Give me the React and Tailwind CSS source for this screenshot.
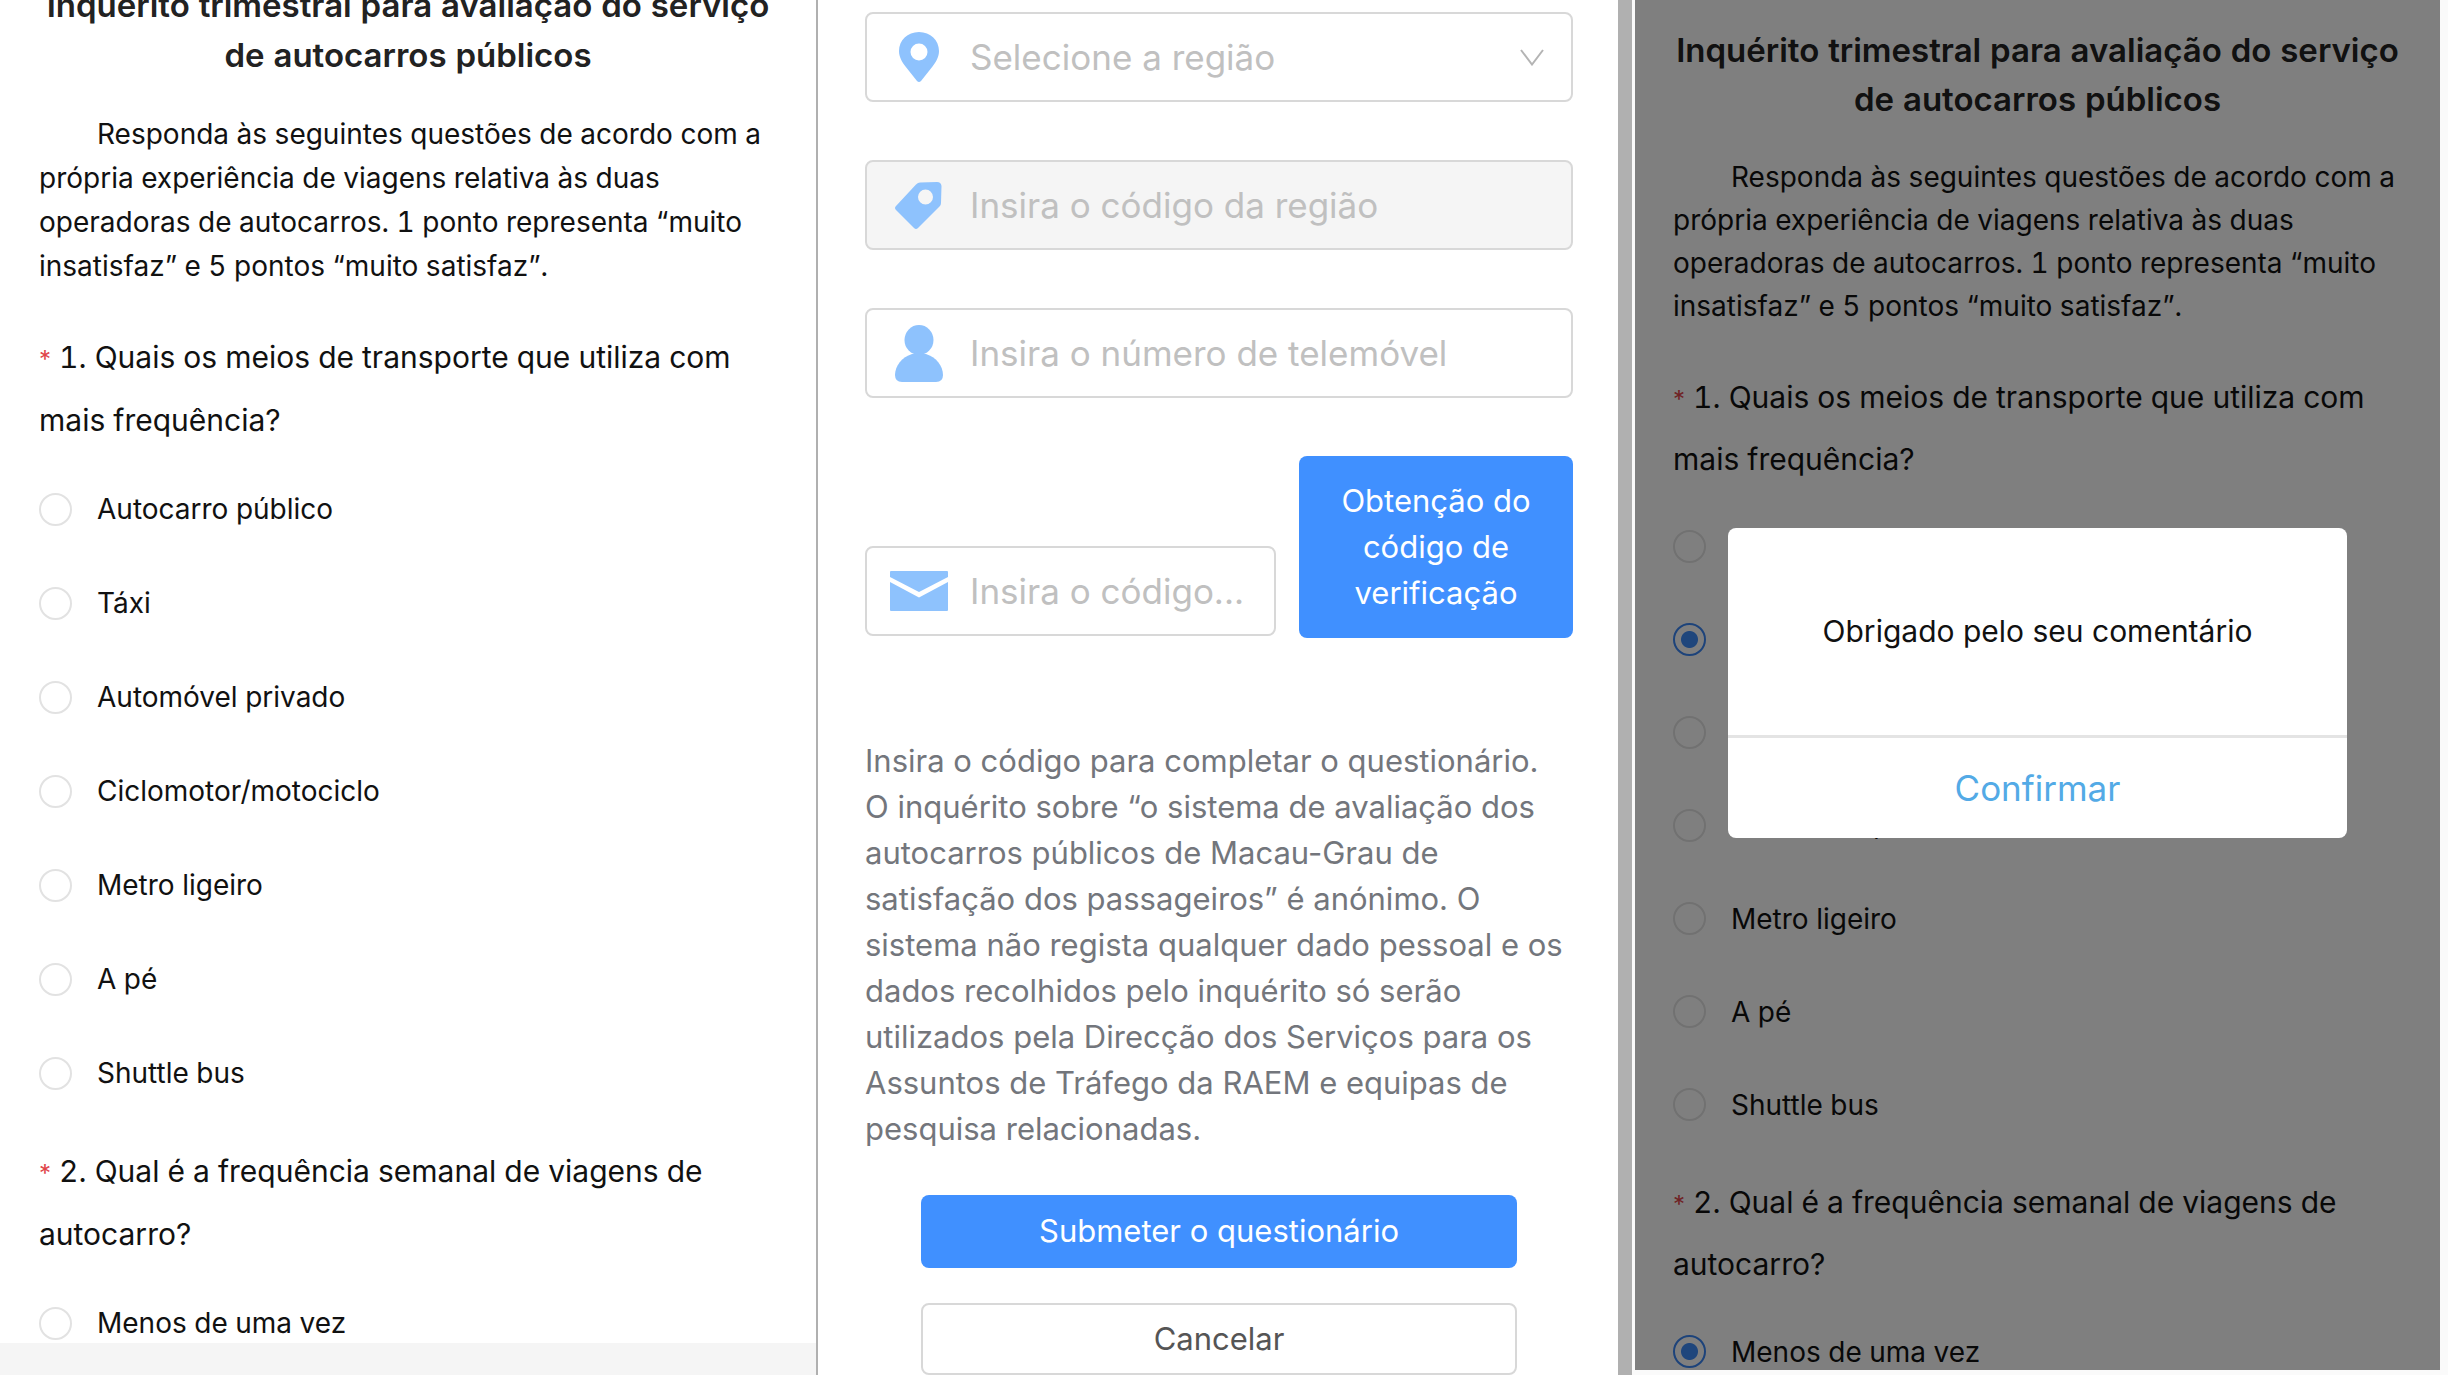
import React, { useState } from 'react';

const meansOfTransport = [
  'Autocarro público',
  'Táxi',
  'Automóvel privado',
  'Ciclomotor/motociclo',
  'Metro ligeiro',
  'A pé',
  'Shuttle bus',
];

const PinIcon = () => (
  <svg width="40" height="50" viewBox="0 0 40 50" fill="#8ec2fd" fillRule="evenodd" aria-hidden="true">
    <path d="M20 0C8.500 0 0 8.500 0 19C0 25 3 30 6.500 34.500L18 49Q20 51 22 49L33.500 34.500C37 30 40 25 40 19C40 8.500 31.500 0 20 0ZM20 11.500a8.500 8.500 0 1 1 0 17a8.500 8.500 0 0 1 0-17Z" />
  </svg>
);

const TagIcon = () => (
  <svg width="47" height="47" viewBox="0 0 47 47" fill="#8ec2fd" fillRule="evenodd" aria-hidden="true">
    <path d="M25 0.500L42 0Q46 0 46.500 4L46 21Q46 23 44.500 24.500L23 46Q21 48 19 46L1 28Q-1 26 1 24L21 2.500Q23 0.700 25 0.500ZM30.500 7.500a7.500 7.500 0 1 0 0 15a7.500 7.500 0 0 0 0-15Z" />
  </svg>
);

const UserIcon = () => (
  <svg width="48" height="57" viewBox="0 0 48 57" fill="#8ec2fd" aria-hidden="true">
    <ellipse cx="24" cy="15" rx="14.500" ry="15" />
    <path d="M17 29H31C41 32 48 41 48 50Q48 57 41 57H7Q0 57 0 50C0 41 7 32 17 29Z" />
  </svg>
);

const MailIcon = () => (
  <svg width="58" height="40" viewBox="0 0 58 40" fill="#8ec2fd" aria-hidden="true">
    <path d="M1 0H57Q58 0 58 1V6L29 21L0 6V1Q0 0 1 0Z" />
    <path d="M0 11L29 26.500L58 11V39Q58 40 57 40H1Q0 40 0 39Z" />
  </svg>
);

const Field = ({ icon, disabled, className = '', children }) => (
  <label
    className={`flex h-[90px] items-center rounded-lg border-2 border-[#d8d8d8] ${disabled ? 'bg-[#f5f5f5]' : 'bg-white'} ${className}`}
  >
    <span className="flex w-[103px] shrink-0 justify-center">{icon}</span>
    {children}
  </label>
);

const inputStyle = 'w-full min-w-0 flex-1 bg-transparent text-[35px] outline-none placeholder:text-[#c0c0c0]';

const Required = () => <span className="text-2xl text-[#e0454a] proportional-nums">*</span>;

const Option = ({ name, label, checked, onChange, rowHeight }) => (
  <label className={`flex items-center gap-[25px] text-[28px] ${rowHeight}`}>
    <input
      type="radio"
      name={name}
      checked={checked}
      onChange={onChange}
      className="size-[33px] shrink-0 appearance-none rounded-full border-2 border-[#e2e2e2] bg-white checked:border-[#3a86f5] checked:bg-[radial-gradient(circle,#3f8cf8_8px,transparent_9px)]"
    />
    {label}
  </label>
);

const Survey = ({ id, answers, lines, className }) => {
  const [transport, setTransport] = useState(answers.transport);
  const [frequency, setFrequency] = useState(answers.frequency);

  return (
    <div className={`min-h-0 flex-1 overflow-hidden text-[#111] tabular-nums ${className}`}>
      <h1 className={`text-center text-[33px] font-semibold text-[#222] ${lines.title}`}>
        Inquérito trimestral para avaliação do serviço de autocarros públicos
      </h1>
      <p className={`indent-[58px] text-[28px] ${lines.intro}`}>
        Responda às seguintes questões de acordo com a própria experiência de viagens relativa às
        duas operadoras de autocarros. 1 ponto representa “muito insatisfaz” e 5 pontos “muito
        satisfaz”.
      </p>

      <fieldset className="mt-[38px]">
        <legend className={`mb-[10px] text-[30px] ${lines.question}`}>
          <Required /> 1. Quais os meios de transporte que utiliza com mais frequência?
        </legend>
        {meansOfTransport.map((item) => (
          <Option
            key={item}
            name={`${id}-transport`}
            label={item}
            checked={transport === item}
            onChange={() => setTransport(item)}
            rowHeight={lines.option}
          />
        ))}
      </fieldset>

      <fieldset className="mt-5">
        <legend className={`mb-[10px] text-[30px] ${lines.question}`}>
          <Required /> 2. Qual é a frequência semanal de viagens de autocarro?
        </legend>
        <Option
          name={`${id}-frequency`}
          label="Menos de uma vez"
          checked={frequency === 'Menos de uma vez'}
          onChange={() => setFrequency('Menos de uma vez')}
          rowHeight={lines.option}
        />
      </fieldset>
    </div>
  );
};

const Verification = () => (
  <form className="flex flex-col pt-3 pr-[45px] pl-[47px]" onSubmit={(e) => e.preventDefault()}>
    <div className="flex flex-col gap-[58px]">
      <Field icon={<PinIcon />}>
        <select aria-label="Selecione a região" className={`${inputStyle} appearance-none text-[#c0c0c0]`}>
          <option>Selecione a região</option>
        </select>
        <svg width="24" height="17" viewBox="0 0 24 17" fill="none" stroke="#b4b4b4" strokeWidth="2" className="mr-[27px] shrink-0" aria-hidden="true">
          <path d="M1 1L12 15.500L23 1" />
        </svg>
      </Field>
      <Field icon={<TagIcon />} disabled>
        <input type="text" disabled aria-label="Código da região" placeholder="Insira o código da região" className={inputStyle} />
      </Field>
      <Field icon={<UserIcon />}>
        <input type="tel" aria-label="Número de telemóvel" placeholder="Insira o número de telemóvel" className={inputStyle} />
      </Field>
      <div className="flex items-end gap-[23px]">
        <Field icon={<MailIcon />} className="mb-0.5 flex-1">
          <input type="text" aria-label="Código de verificação" placeholder="Insira o código..." className={inputStyle} />
        </Field>
        <button type="button" className="h-[182px] w-[274px] rounded-lg bg-[#4090ff] px-8 text-[31px] leading-[46px] text-white">
          Obtenção do código de verificação
        </button>
      </div>
    </div>

    <p className="mt-[100px] text-[31px] leading-[46px] text-[#73767c]">
      Insira o código para completar o questionário.
      <br />
      O inquérito sobre “o sistema de avaliação dos autocarros públicos de Macau-Grau de satisfação
      dos passageiros” é anónimo. O sistema não regista qualquer dado pessoal e os dados recolhidos
      pelo inquérito só serão utilizados pela Direcção dos Serviços para os Assuntos de Tráfego da
      RAEM e equipas de pesquisa relacionadas.
    </p>

    <div className="mx-14 mt-[43px] flex flex-col gap-[35px] text-[31px]">
      <button type="submit" className="h-[73px] rounded-lg bg-[#4090ff] text-white">
        Submeter o questionário
      </button>
      <button type="button" className="h-[72px] rounded-lg border-2 border-[#d8d8d8] bg-white text-[#555]">
        Cancelar
      </button>
    </div>
  </form>
);

const ThankYouDialog = () => (
  <div className="absolute inset-0 flex items-center justify-center bg-black/50 pb-1">
    <div role="dialog" aria-label="Obrigado pelo seu comentário" className="w-[77%] overflow-hidden rounded-lg bg-white text-center">
      <p className="flex h-[207px] items-center justify-center text-[30px] text-[#111]">
        Obrigado pelo seu comentário
      </p>
      <button type="button" className="h-[103px] w-full border-t-[3px] border-[#e4e4e4] text-[35px] text-[#53aae6]">
        Confirmar
      </button>
    </div>
  </div>
);

const App = () => (
  <main className="grid h-screen grid-cols-3 overflow-hidden bg-white font-[Inter,sans-serif]">
    <section className="flex min-h-0 flex-col overflow-hidden">
      <Survey
        id="empty"
        answers={{}}
        className="px-[39px]"
        lines={{
          title: '-mt-5 leading-[50px]',
          intro: 'mt-8 leading-[44px]',
          question: 'leading-[63px]',
          option: 'h-[94px]',
        }}
      />
      <div className="h-8 shrink-0 bg-[#f5f5f5]" />
    </section>

    <section className="min-h-0 overflow-hidden border-r-[14px] border-l-2 border-[#b0b0b0]">
      <Verification />
    </section>

    <section className="flex min-h-0 flex-col overflow-hidden bg-[#fafafa] pr-2 pb-[5px] pl-[3px]">
      <div className="relative flex min-h-0 flex-1 flex-col bg-white">
        <Survey
          id="answered"
          answers={{ transport: 'Táxi', frequency: 'Menos de uma vez' }}
          className="px-[38px] pt-[26px]"
          lines={{
            title: 'leading-[49px]',
            intro: 'mt-8 leading-[43px]',
            question: 'leading-[62px]',
            option: 'h-[93px]',
          }}
        />
        <ThankYouDialog />
      </div>
    </section>
  </main>
);

export default App;
